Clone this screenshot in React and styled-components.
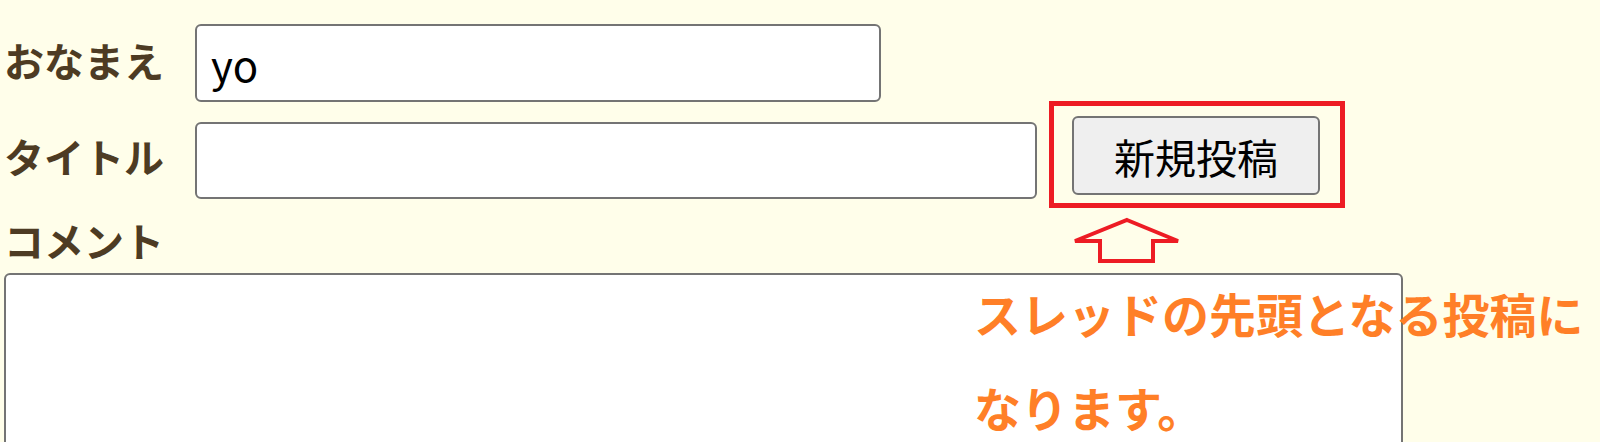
import styled, { createGlobalStyle } from 'styled-components';

const GlobalStyle = createGlobalStyle`
  html, body {
    margin: 0;
    overflow: hidden;
    background: #fffeea;
  }
  body {
    font-family: "Noto Sans CJK JP", "Noto Sans", sans-serif;
  }
`;

const Page = styled.form`
  position: relative;
  box-sizing: border-box;
  height: 442px;
  overflow: hidden;
  padding: 24px 0 0 4px;
`;

const Row = styled.div`
  display: flex;
  align-items: center;
  gap: 31px;
  & + & {
    margin-top: 20px;
  }
`;

const Label = styled.label`
  display: block;
  width: 160px;
  font-size: 40px;
  font-weight: 700;
  line-height: 40px;
  color: #4d3b23;
  white-space: nowrap;
  margin-bottom: ${(p) => p.$lift || 0}px;
`;

const TextInput = styled.input`
  box-sizing: border-box;
  width: ${(p) => p.$width}px;
  height: ${(p) => p.$height}px;
  padding: 0 14px;
  border: 2px solid #747474;
  border-radius: 6px;
  background: #fff;
  font-family: "Noto Sans CJK JP", sans-serif;
  font-size: 42px;
  color: #000;
  outline: none;
`;

const ButtonWrap = styled.div`
  position: relative;
  align-self: flex-start;
  margin: -6px 0 0 4px;
`;

const PostButton = styled.button`
  box-sizing: border-box;
  width: 248px;
  height: 79px;
  border: 2px solid #747474;
  border-radius: 6px;
  background: #efefef;
  font-family: "Noto Sans CJK JP", sans-serif;
  font-size: 41px;
  color: #000;
  padding: 0;
`;

const Highlight = styled.div`
  position: absolute;
  top: -15px;
  left: -23px;
  right: -25px;
  bottom: -13px;
  border: 5px solid #ed1c24;
  pointer-events: none;
`;

const ArrowMark = styled.svg`
  position: absolute;
  left: -2px;
  top: 99px;
  width: 115px;
  height: 50px;
  overflow: visible;
`;

const CommentLabel = styled(Label)`
  margin: 21px 0 13px 0;
  width: auto;
`;

const CommentBox = styled.textarea`
  display: block;
  box-sizing: border-box;
  width: 1399px;
  height: 240px;
  border: 2px solid #747474;
  border-radius: 6px;
  background: #fff;
  resize: none;
  outline: none;
`;

const Note = styled.p`
  position: absolute;
  left: 974px;
  top: 266px;
  margin: 0;
  font-size: 47px;
  font-weight: 700;
  line-height: 94px;
  color: #ff7f27;
  white-space: nowrap;
`;

export default function App() {
  return (
    <>
      <GlobalStyle />
      <Page>
        <Row>
          <Label $lift={6}>おなまえ</Label>
          <TextInput $width={686} $height={78} defaultValue="yo" />
        </Row>
        <Row>
          <Label $lift={10}>タイトル</Label>
          <TextInput $width={842} $height={77} />
          <ButtonWrap>
            <PostButton type="button">新規投稿</PostButton>
            <Highlight />
            <ArrowMark viewBox="0 0 115 50">
              <polygon
                points="57,5 108,26 83,26 83,46 30,46 30,26 5,26"
                fill="none"
                stroke="#ed1c24"
                strokeWidth="4"
              />
            </ArrowMark>
          </ButtonWrap>
        </Row>
        <CommentLabel>コメント</CommentLabel>
        <CommentBox />
        <Note>
          スレッドの先頭となる投稿に
          <br />
          なります。
        </Note>
      </Page>
    </>
  );
}
